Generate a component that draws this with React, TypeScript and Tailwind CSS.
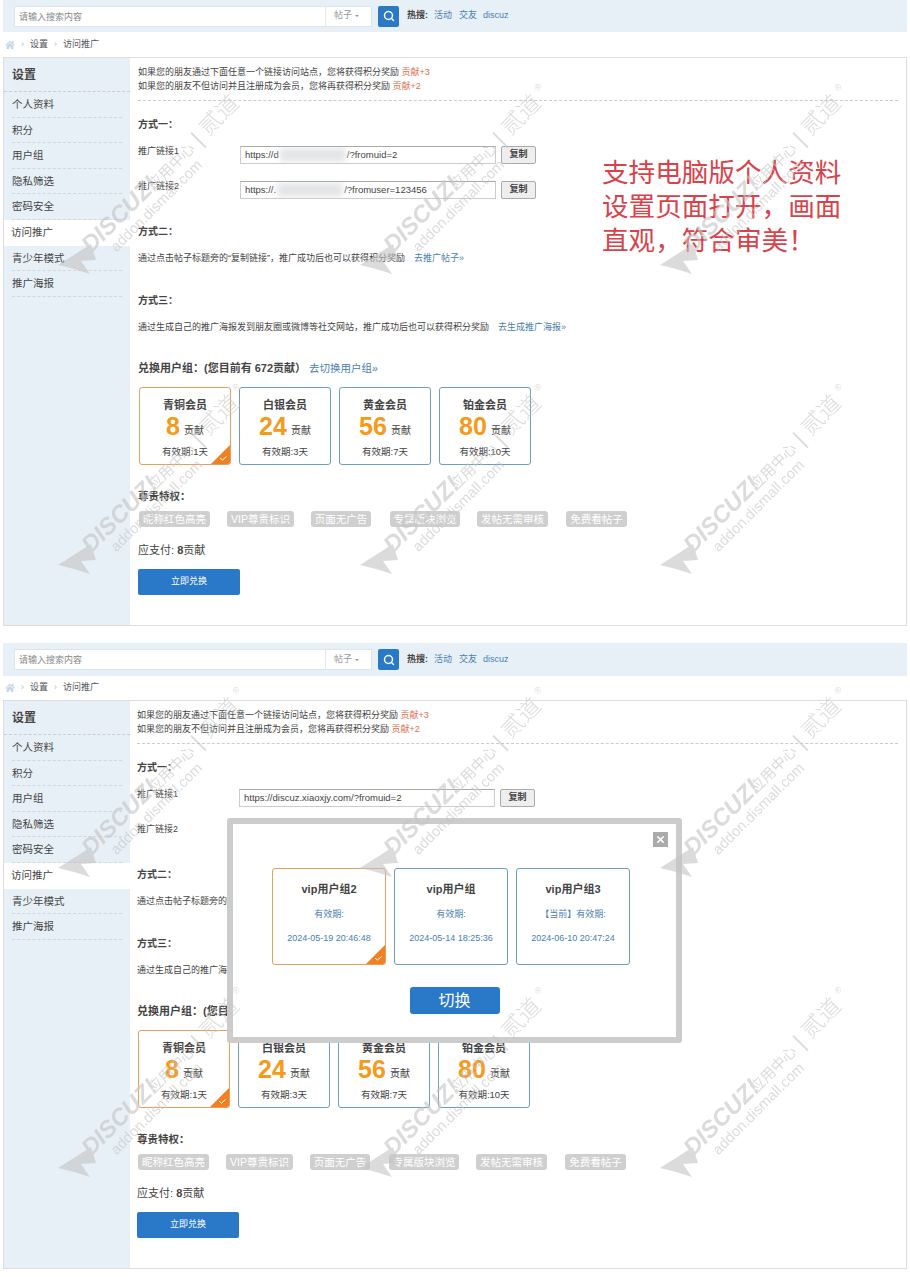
import { FaHome } from 'react-icons/fa';
import { Search, X } from 'lucide-react';

const font = 'font-["Liberation_Sans","Noto_Sans_CJK_SC",sans-serif]';

const menu = ['个人资料', '积分', '用户组', '隐私筛选', '密码安全', '访问推广', '青少年模式', '推广海报'];
const plans = [
  { name: '青铜会员', num: 8, days: '有效期:1天' },
  { name: '白银会员', num: 24, days: '有效期:3天' },
  { name: '黄金会员', num: 56, days: '有效期:7天' },
  { name: '铂金会员', num: 80, days: '有效期:10天' },
];
const perks = [
  { label: '昵称红色高亮', w: 'w-[71px]', mr: 'mr-[17px]' },
  { label: 'VIP尊贵标识', w: 'w-[67px]', mr: 'mr-[17px]' },
  { label: '页面无广告', w: 'w-[60px]', mr: 'mr-[19px]' },
  { label: '专属版块浏览', w: 'w-[70px]', mr: 'mr-[17px]' },
  { label: '发帖无需审核', w: 'w-[71px]', mr: 'mr-[18px]' },
  { label: '免费看帖子', w: 'w-[61px]', mr: '' },
];
const groups = [
  { name: 'vip用户组2', label: '有效期:', date: '2024-05-19 20:46:48', active: true },
  { name: 'vip用户组', label: '有效期:', date: '2024-05-14 18:25:36', active: false },
  { name: 'vip用户组3', label: '【当前】有效期:', date: '2024-06-10 20:47:24', active: false },
];
const markX = [58, 360, 660];
const markY = [260, 560, 863, 1163];

function Corner() {
  return (
    <span className="absolute bottom-0 right-0 h-[19px] w-[19px] bg-[#f08020] [clip-path:polygon(100%_0,100%_100%,0_100%)]">
      <svg viewBox="0 0 19 19" className="h-full w-full">
        <path d="M9 13l2.5 2 4-3.5" fill="none" stroke="#fff" strokeWidth="1" />
      </svg>
    </span>
  );
}

function CopyRow({ label, pre, post, second }: { label: string; pre: string; post?: string; second?: boolean }) {
  return (
    <div className={`flex h-[18px] items-start ${second ? 'mt-[17px]' : 'mt-[14px]'}`}>
      <span className="w-[102px] shrink-0 text-[9px] leading-[10px] text-[#444]">{label}</span>
      <div className="flex h-[18px] w-[256px] items-center overflow-hidden border border-[#ccc] border-t-[#aaa] bg-white pl-[4px] text-[9.5px] text-[#444]">
        {pre}
        {post && (
          <>
            <span className="mx-[1px] h-[14px] w-[66px] bg-[#e4e5e7] blur-[3px]" />
            {post}
          </>
        )}
      </div>
      <button type="button" className="ml-[5px] h-[18px] w-[35px] rounded-[2px] border border-[#aaa] bg-[#eee] text-[9px] font-bold text-[#444]">
        复制
      </button>
    </div>
  );
}

function Screen({ first }: { first: boolean }) {
  return (
    <section className={first ? '' : 'mt-[17px]'}>
      <div className={`flex items-center bg-[#e8f0f7] pl-[11px] ${first ? 'h-[32px]' : 'h-[33px]'}`}>
        <div className="flex h-[21px] w-[358px] border border-[#dde5ec] bg-white">
          <span className="flex-1 pl-[4px] text-[9px] leading-[20px] text-[#888]">请输入搜索内容</span>
          <span className="flex w-[46px] items-center gap-[3px] border-l border-[#e4e8ec] pl-[8px] text-[9px] text-[#999]">
            帖子
            <span className="h-0 w-0 border-x-[2px] border-t-[2px] border-x-transparent border-t-[#999]" />
          </span>
        </div>
        <button type="button" className="ml-[6px] flex h-[21px] w-[21px] items-center justify-center rounded-[2px] bg-[#2a78c8]">
          <Search size={12} color="#fff" strokeWidth={3} />
        </button>
        <span className="ml-[8px] text-[9px] font-bold text-[#444]">热搜:</span>
        <span className="ml-[6px] text-[9px] text-[#4a80b0]">活动</span>
        <span className="ml-[7px] text-[9px] text-[#4a80b0]">交友</span>
        <span className="ml-[6px] text-[9px] text-[#4a80b0]">discuz</span>
      </div>
      <div className={`flex items-center pl-[2px] text-[9px] text-[#555] ${first ? 'h-[25px]' : 'h-[24px]'}`}>
        <FaHome size={10} color="#c3d6e6" />
        <span className="mx-[6px] text-[#bbb]">›</span>
        设置
        <span className="mx-[6px] text-[#bbb]">›</span>
        访问推广
      </div>
      <div className="relative flex h-[569px] border border-[#ddd] bg-white">
        <aside className="w-[126px] shrink-0 bg-[#e8f0f7]">
          <div className="flex h-[34px] items-center border-b border-dashed border-[#ccc] pl-[8px] text-[12px] font-bold text-[#444]">设置</div>
          {menu.map((item) => (
            <div
              key={item}
              className={
                item === '访问推广'
                  ? 'h-[25.6px] bg-white pl-[7px] text-[10.5px] leading-[25px] text-[#444]'
                  : 'mx-[8px] h-[25.6px] border-b border-dashed border-[#d0d6dc] text-[10.5px] leading-[25px] text-[#444]'
              }
            >
              {item}
            </div>
          ))}
        </aside>
        <main className={`flex-1 pr-[8px] pt-[7px] ${first ? 'pl-[8px]' : 'pl-[7px]'}`}>
          <p className="text-[9px] leading-[14px] text-[#444]">
            如果您的朋友通过下面任意一个链接访问站点，您将获得积分奖励 <span className="text-[#e07050]">贡献+3</span>
          </p>
          <p className="text-[9px] leading-[14px] text-[#444]">
            如果您的朋友不但访问并且注册成为会员，您将再获得积分奖励 <span className="text-[#e07050]">贡献+2</span>
          </p>
          <div className="mt-[7px] border-b border-dashed border-[#ccc]" />
          <h3 className="mt-[17px] text-[10px] font-bold leading-[14px] text-[#444]">方式一：</h3>
          {first ? (
            <>
              <CopyRow label="推广链接1" pre="https://d" post="/?fromuid=2" />
              <CopyRow label="推广链接2" pre="https://." post="/?fromuser=123456" second />
            </>
          ) : (
            <>
              <CopyRow label="推广链接1" pre="https://discuz.xiaoxjy.com/?fromuid=2" />
              <CopyRow label="推广链接2" pre="" second />
            </>
          )}
          <h3 className="mt-[26px] text-[10px] font-bold leading-[14px] text-[#444]">方式二：</h3>
          <p className="mt-[12px] text-[9px] leading-[14px] text-[#444]">
            通过点击帖子标题旁的“复制链接”，推广成功后也可以获得积分奖励
            <span className="ml-[9px] text-[#4a80b0]">去推广帖子»</span>
          </p>
          <h3 className="mt-[29px] text-[10px] font-bold leading-[14px] text-[#444]">方式三：</h3>
          <p className="mt-[12px] text-[9px] leading-[14px] text-[#444]">
            通过生成自己的推广海报发到朋友圈或微博等社交网站，推广成功后也可以获得积分奖励
            <span className="ml-[9px] text-[#4a80b0]">去生成推广海报»</span>
          </p>
          <div className="mt-[27px] text-[11px] leading-[14px]">
            <b className="text-[#444]">兑换用户组：(您目前有 672贡献）</b>
            <span className="ml-[3px] text-[10.5px] text-[#4a80b0]">去切换用户组»</span>
          </div>
          <div className="mt-[12px] flex gap-[8px] pl-[1px]">
            {plans.map((plan, i) => (
              <div
                key={plan.name}
                className={`relative h-[78px] w-[92px] overflow-hidden rounded-[3px] border text-center ${i === 0 ? 'border-[#e8a060]' : 'border-[#6f9fbd]'}`}
              >
                <div className="mt-[10px] text-[11px] font-bold leading-[14px] text-[#444]">{plan.name}</div>
                <div className="mt-[2px] flex h-[26px] items-center justify-center">
                  <span className="mr-[4px] text-[25px] font-bold text-[#f59a1b]">{plan.num}</span>
                  <span className="mt-[7px] text-[10px] text-[#444]">贡献</span>
                </div>
                <div className="mt-[5px] text-[9.5px] leading-[14px] text-[#444]">{plan.days}</div>
                {i === 0 && <Corner />}
              </div>
            ))}
          </div>
          <h3 className="mt-[24px] text-[10.5px] font-bold leading-[14px] text-[#444]">尊贵特权：</h3>
          <div className="mt-[8px] flex pl-[1px]">
            {perks.map((perk) => (
              <span key={perk.label} className={`h-[16px] rounded-[3px] bg-[#cfcfcf] text-center text-[10.5px] leading-[16px] text-white ${perk.w} ${perk.mr}`}>
                {perk.label}
              </span>
            ))}
          </div>
          <p className="mt-[16px] text-[11px] leading-[14px] text-[#444]">
            应支付: <b>8</b>贡献
          </p>
          <button type="button" className="mt-[12px] h-[26px] w-[102px] rounded-[2px] bg-[#2a78c8] text-[9px] text-white">
            立即兑换
          </button>
        </main>
        {first && (
          <p className="absolute left-[598px] top-[98px] text-[26.6px] leading-[34px] text-[#d9424a]">
            支持电脑版个人资料
            <br />
            设置页面打开，画面
            <br />
            直观，符合审美！
          </p>
        )}
        {!first && <SwitchModal />}
      </div>
    </section>
  );
}

function SwitchModal() {
  return (
    <div className="absolute left-[223px] top-[117px] h-[225px] w-[455px] rounded-[3px] border-[6px] border-[#ccc] bg-white">
      <button type="button" className="absolute right-[8px] top-[8px] flex h-[15px] w-[15px] items-center justify-center bg-[#aaa]">
        <X size={11} color="#fff" strokeWidth={3.5} />
      </button>
      <div className="mt-[44px] flex gap-[8px] pl-[39px]">
        {groups.map((g) => (
          <div
            key={g.name}
            className={`relative h-[97px] w-[114px] overflow-hidden rounded-[3px] border text-center ${g.active ? 'border-[#e8a060]' : 'border-[#6f9fbd]'}`}
          >
            <div className="mt-[13px] text-[11px] font-bold leading-[14px] text-[#444]">{g.name}</div>
            <div className="mt-[11px] text-[9px] leading-[14px] text-[#4a80b0]">{g.label}</div>
            <div className="mt-[10px] text-[9px] leading-[14px] text-[#4a80b0]">{g.date}</div>
            {g.active && <Corner />}
          </div>
        ))}
      </div>
      <button type="button" className="mx-auto mt-[22px] block h-[27px] w-[90px] rounded-[3px] bg-[#2a78c8] text-[16px] text-white">
        切换
      </button>
    </div>
  );
}

function Watermarks() {
  return (
    <svg width="910" height="1277" className="pointer-events-none absolute left-0 top-0 opacity-60">
      {markY.map((y) =>
        markX.map((x) => (
          <g key={`${x}-${y}`} transform={`translate(${x} ${y})`} className="fill-[#c4c4c4]">
            <path d="M0 5 L33-16 L38 0 L23 1 L32 14 L16 9 Z" />
            <g transform="translate(33 -6) rotate(-45) scale(1.13)">
              <text x="0" y="0" fontSize="21" fontWeight="700" fontStyle="italic" fontFamily="Liberation Sans">DISCUZ!</text>
              <text x="79" y="0" fontSize="13" fontFamily="Noto Sans CJK SC">应用中心</text>
              <text x="136" y="1" fontSize="20" fontFamily="Liberation Sans" fontWeight="300">|</text>
              <text x="147" y="0" fontSize="20" fontFamily="Noto Sans CJK SC" fontWeight="300">贰道</text>
              <text x="192" y="-11" fontSize="8" fontFamily="Liberation Sans">®</text>
              <text x="17" y="15" fontSize="13" fontFamily="Liberation Sans">addon.dismall.com</text>
            </g>
          </g>
        )),
      )}
    </svg>
  );
}

export default function App() {
  return (
    <div className={`relative h-[1277px] w-[910px] overflow-hidden bg-white px-[3px] ${font}`}>
      <Screen first />
      <Screen first={false} />
      <Watermarks />
    </div>
  );
}
